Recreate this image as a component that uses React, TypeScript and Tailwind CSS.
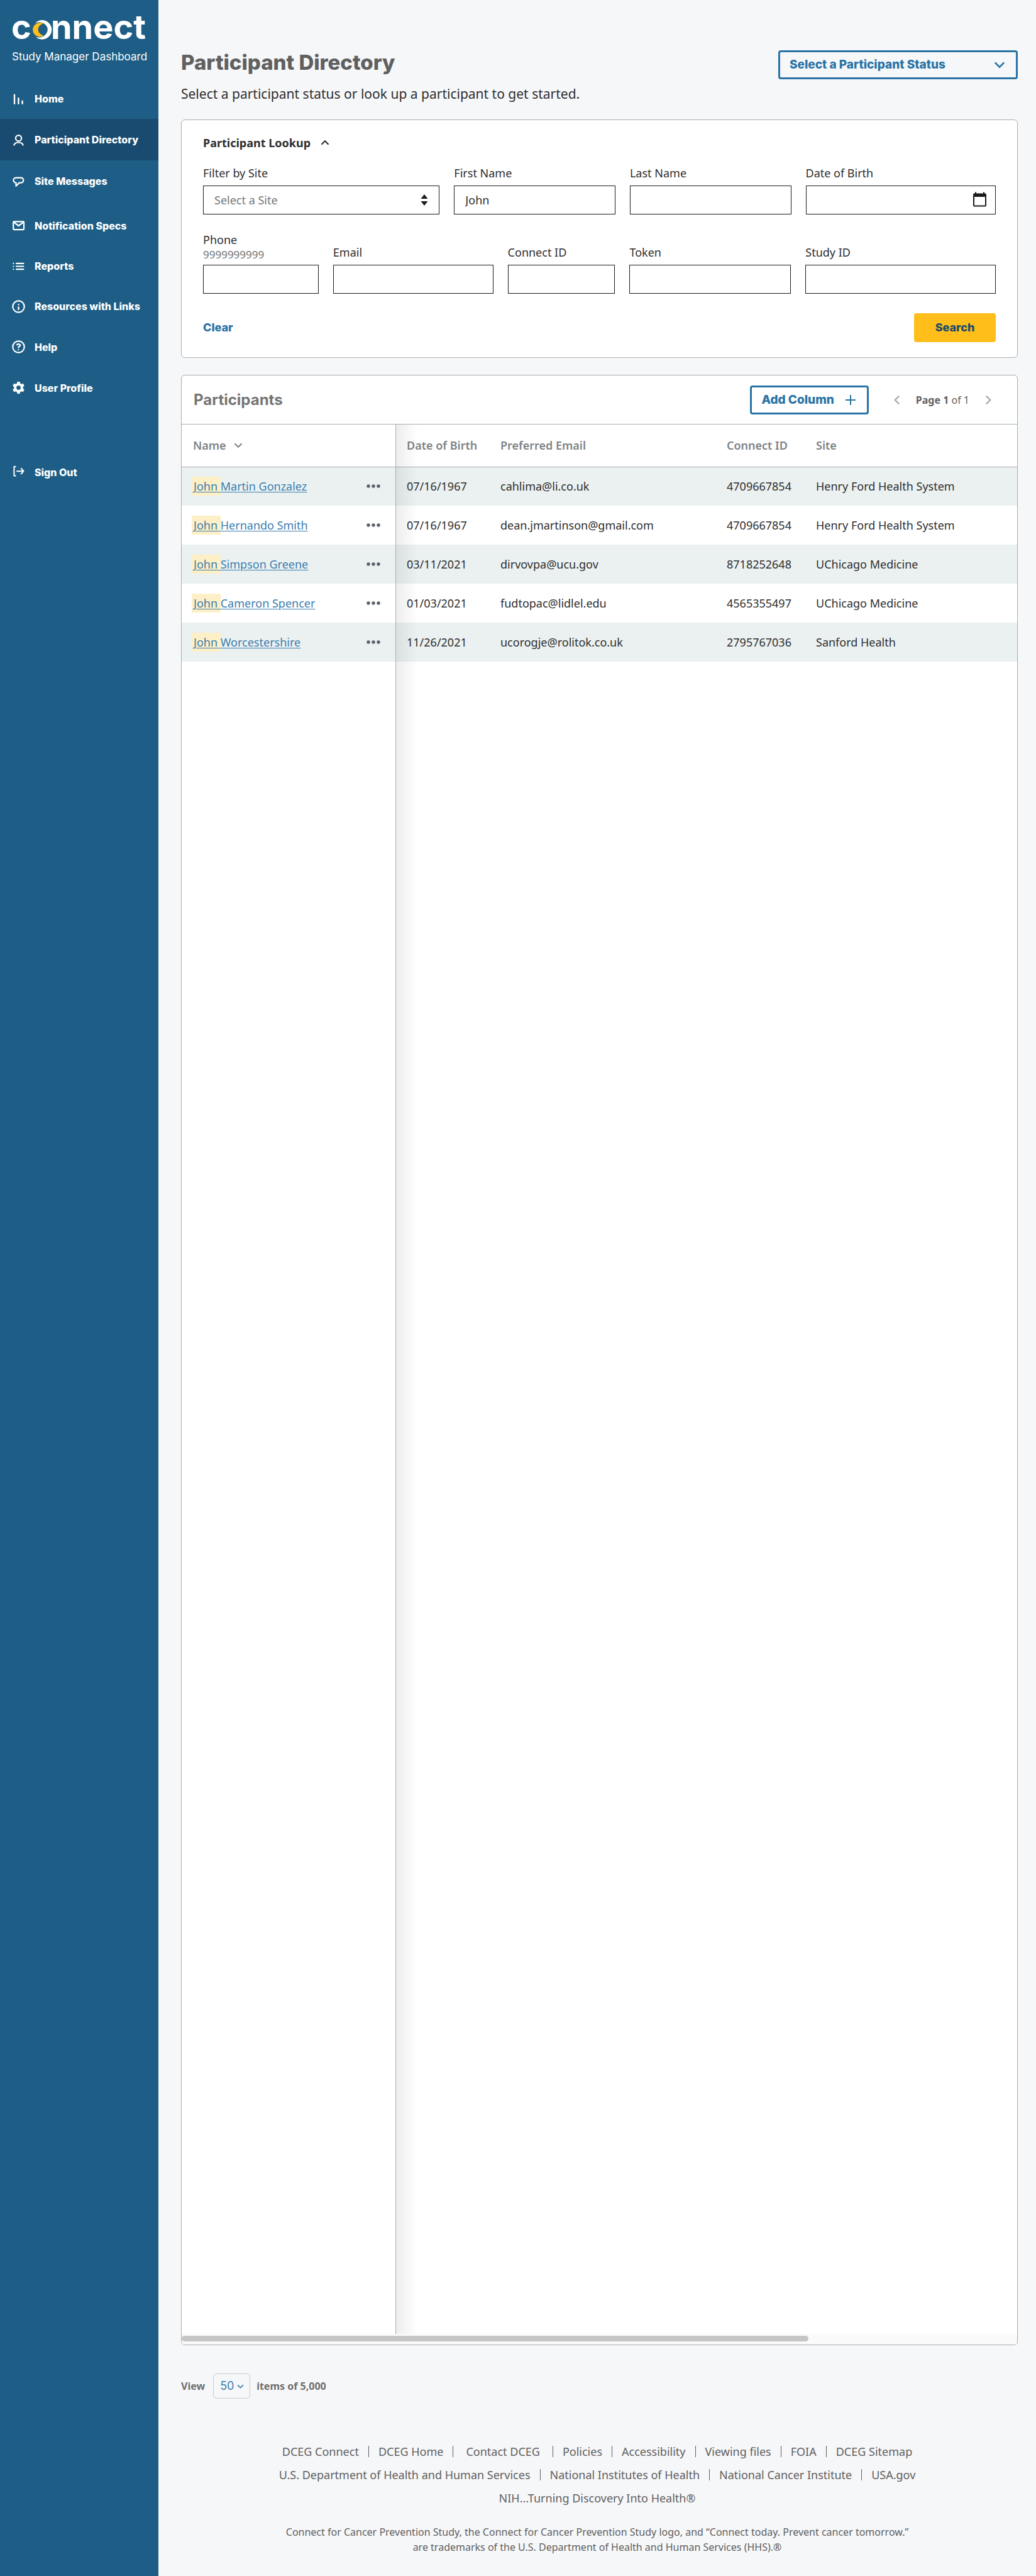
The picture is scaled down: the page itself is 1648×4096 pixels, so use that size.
import type { ReactNode } from "react";

const NOTO = "font-['Noto_Sans',sans-serif]";
const INTER = "font-['Inter',sans-serif]";

function Logo() {
  return (
    <svg viewBox="-4 -14 220 70" className="h-[70px] w-[220px]" role="img" aria-label="connect">
      <g fill="#fff" fontFamily="Inter, sans-serif" fontWeight="700" fontSize="54">
        <text x="-1" y="40">c</text>
        <text x="62" y="40">nnect</text>
      </g>
      <path
        fill="#fff"
        d="M36.7 15A15.3 15.3 0 1 1 38.2 37.1C43 38.2 48.5 37.5 51.5 34.8C58.5 29 58.5 20.5 51.5 15.8C48 13 41.5 12.3 36.7 15Z"
      />
      <path fill="#ffbe19" d="M50 15.4A11.3 11.3 0 1 0 50.8 34.6C38.8 31.5 38.8 18.5 50 15.4Z" />
    </svg>
  );
}

function Icon({ children }: { children: ReactNode }) {
  return (
    <svg
      viewBox="0 0 21 21"
      className="size-[21px] shrink-0"
      fill="none"
      stroke="currentColor"
      strokeWidth="2.2"
      strokeLinecap="round"
      strokeLinejoin="round"
      aria-hidden="true"
    >
      {children}
    </svg>
  );
}

function Chevron({ dir, className }: { dir: "up" | "down" | "left" | "right"; className: string }) {
  const d = { up: "M2 14l8-8 8 8", down: "M2 6l8 8 8-8", left: "M14 2l-8 8 8 8", right: "M6 2l8 8-8 8" }[dir];
  return (
    <svg viewBox="0 0 20 20" className={className} fill="none" stroke="currentColor" strokeWidth="3" aria-hidden="true">
      <path d={d} />
    </svg>
  );
}

const nav: { label: string; icon: ReactNode; row: string }[] = [
  { label: "Home", row: "h-[65px]", icon: <path strokeWidth="2.4" d="M4 4.6v14.2M10.4 10.2v8.6M16.6 14.6v4.2" /> },
  {
    label: "Participant Directory",
    row: "h-[66px] bg-[#184b6f] border-l-[#ffbe19]",
    icon: (
      <>
        <circle cx="10.5" cy="7.7" r="4.6" />
        <path strokeLinecap="butt" d="M3.3 19.5c.2-3.6 2.8-5 7.2-5s7 1.4 7.2 5" />
      </>
    ),
  },
  {
    label: "Site Messages",
    row: "h-[65px]",
    icon: <path d="M6.3 5.6h8a4 4 0 0 1 0 8h-2.6l-5.2 5.2v-5.2a4 4 0 0 1-.2-8z" />,
  },
  {
    label: "Notification Specs",
    row: "mt-[6px] h-[65px]",
    icon: (
      <>
        <rect x="2.2" y="4.3" width="16.8" height="12.8" rx="1" />
        <path d="M3 5.3l7.6 5.7 7.6-5.7" />
      </>
    ),
  },
  {
    label: "Reports",
    row: "h-[64px]",
    icon: <path d="M2.3 5.9h.1M2.3 10.5h.1M2.3 15.1h.1M7 5.9h11.4M7 10.5h11.4M7 15.1h11.4" />,
  },
  {
    label: "Resources with Links",
    row: "h-[64px]",
    icon: (
      <>
        <circle cx="10.5" cy="10.5" r="9.2" />
        <path strokeWidth="2.4" d="M10.5 7.1v.1M10.5 11.5v3.3" />
      </>
    ),
  },
  {
    label: "Help",
    row: "h-[65px]",
    icon: (
      <>
        <circle cx="10.5" cy="10.5" r="9.2" />
        <path d="M8 7.1c1.5-1.5 5.5-1.2 5.2 1.1-.2 1.6-2.8 1.6-3 3.4M10.2 15v.1" />
      </>
    ),
  },
  {
    label: "User Profile",
    row: "h-[65px]",
    icon: (
      <path
        fill="currentColor"
        stroke="none"
        fillRule="evenodd"
        transform="translate(.5 .5)"
        d="M7.9.5h4.2l.5 2.7 1.9 1.1 2.7-1 2 3.6-2.1 1.900v2.4l2.1 1.9-2 3.6-2.7-1-1.9 1.1-.5 2.7H7.9l-.5-2.7-1.9-1.1-2.7 1-2-3.600 2.1-1.9V8.8L.8 6.900l2-3.6 2.7 1 1.9-1.1zM10 6.600a3.4 3.4 0 1 0 0 6.8 3.4 3.4 0 0 0 0-6.8z"
      />
    ),
  },
  {
    label: "Sign Out",
    row: "mt-[69px] h-[65px]",
    icon: <path strokeWidth="2" d="M5.6 2H3.4v14.4h2.2M8 9.2h10M14.8 5l3.7 4.2-3.7 4.2" />,
  },
];

function Field({ id, label, children }: { id: string; label: string; children?: ReactNode }) {
  return (
    <div className="flex flex-col gap-2">
      <label htmlFor={id}>{label}</label>
      {children ?? <TextBox id={id} />}
    </div>
  );
}

function TextBox({ id, value }: { id: string; value?: string }) {
  return (
    <input id={id} type="text" defaultValue={value} className="h-[46px] w-full border border-[#1b1b1b] bg-white px-[17px]" />
  );
}

const people = [
  ["Martin Gonzalez", "07/16/1967", "cahlima@li.co.uk", "4709667854", "Henry Ford Health System"],
  ["Hernando Smith", "07/16/1967", "dean.jmartinson@gmail.com", "4709667854", "Henry Ford Health System"],
  ["Simpson Greene", "03/11/2021", "dirvovpa@ucu.gov", "8718252648", "UChicago Medicine"],
  ["Cameron Spencer", "01/03/2021", "fudtopac@lidlel.edu", "4565355497", "UChicago Medicine"],
  ["Worcestershire", "11/26/2021", "ucorogje@rolitok.co.uk", "2795767036", "Sanford Health"],
];

function LinkRow({ links }: { links: string[] }) {
  return (
    <ul className="flex h-[37px] items-center justify-center">
      {links.map((l, i) => (
        <li key={l} className="flex items-center">
          {i > 0 && <span className="mx-[15px] h-[18px] w-px bg-[#606060]" />}
          <a href="#" className={l === "Contact DCEG" ? "px-[5px]" : ""}>
            {l}
          </a>
        </li>
      ))}
    </ul>
  );
}

export default function App() {
  return (
    <div className={`flex min-h-screen bg-[#f6f7f9] text-[18px] leading-6 text-[#2e2e2f] ${NOTO}`}>
      <aside className={`w-[252px] shrink-0 bg-[#1e5e86] pt-2 text-white ${INTER}`}>
        <div className="pl-[15px]">
          <Logo />
          <p className="pl-1 text-[17px] leading-6">Study Manager Dashboard</p>
        </div>
        <nav className="mt-[22px]">
          <ul>
            {nav.map((n) => (
              <li key={n.label} className={`border-l-[6px] border-l-transparent ${n.row}`}>
                <a href="#" className="flex h-full items-center gap-[15px] pl-[13px] text-[16px] font-extrabold">
                  <Icon>{n.icon}</Icon>
                  {n.label}
                </a>
              </li>
            ))}
          </ul>
        </nav>
      </aside>

      <main className="flex min-w-0 grow flex-col pt-[79px] pr-[29px] pl-9">
        <header className="flex items-start justify-between">
          <div>
            <h1 className={`text-[33px] leading-10 font-extrabold text-[#606060] ${INTER}`}>Participant Directory</h1>
            <p className="mt-4 text-[21px] leading-7">Select a participant status or look up a participant to get started.</p>
          </div>
          <div className={`relative mt-px w-[381px] text-[#2973a5] ${INTER}`}>
            <select
              aria-label="Participant status"
              className="h-[46px] w-full appearance-none rounded-[4px] border-[3px] border-[#2973a5] bg-transparent pl-[15px] text-[19px] font-extrabold"
            >
              <option>Select a Participant Status</option>
            </select>
            <Chevron dir="down" className="pointer-events-none absolute top-[14px] right-5 size-[18px]" />
          </div>
        </header>

        <form className="mt-[27px] rounded-[6px] border border-[#a9adae] bg-white pt-[22px] pr-[34px] pb-6 pl-[34px]">
          <h2>
            <button type="button" className="flex h-7 items-center gap-4 font-bold">
              Participant Lookup
              <Chevron dir="up" className="size-[14px]" />
            </button>
          </h2>
          <div className="mt-[22px] grid grid-cols-[377fr_257fr_257fr_303fr] gap-[23px]">
            <Field id="site" label="Filter by Site">
              <div className="relative">
                <select id="site" className="h-[46px] w-full appearance-none border border-[#1b1b1b] bg-white pl-[17px] text-[#71767a]">
                  <option>Select a Site</option>
                </select>
                <svg viewBox="0 0 12 18" className="pointer-events-none absolute top-[14px] right-[18px] h-[18px] w-3" fill="#1b1b1b" aria-hidden="true">
                  <path d="M6 0l5.5 7h-11zM6 18l5.5-7h-11z" />
                </svg>
              </div>
            </Field>
            <Field id="first" label="First Name">
              <TextBox id="first" value="John" />
            </Field>
            <Field id="last" label="Last Name" />
            <Field id="dob" label="Date of Birth">
              <div className="relative">
                <TextBox id="dob" />
                <button type="button" aria-label="Open calendar" className="absolute top-[10px] right-[15px]">
                  <svg viewBox="0 0 21 24" className="h-6 w-[21px]" aria-hidden="true">
                    <path
                      fill="#1b1b1b"
                      fillRule="evenodd"
                      d="M3 .5h2v2h11v-2h2v2h1a2 2 0 0 1 2 2v17a2 2 0 0 1-2 2H2a2 2 0 0 1-2-2v-17a2 2 0 0 1 2-2h1zM2 8v13.5h17v-13.5z"
                    />
                  </svg>
                </button>
              </div>
            </Field>
          </div>
          <div className="mt-7 grid grid-cols-[184fr_255fr_171fr_257fr_303fr] items-end gap-[23px]">
            <div className="flex flex-col gap-1">
              <label htmlFor="phone">
                Phone
                <span className="block text-[17px] text-[#71767a]">9999999999</span>
              </label>
              <TextBox id="phone" />
            </div>
            <Field id="email" label="Email" />
            <Field id="cid" label="Connect ID" />
            <Field id="token" label="Token" />
            <Field id="study" label="Study ID" />
          </div>
          <div className={`mt-[31px] flex items-center justify-between font-extrabold ${INTER}`}>
            <button type="reset" className="text-[#2973a5]">Clear</button>
            <button type="submit" className="h-[46px] w-[130px] rounded-[4px] bg-[#ffbe19] text-[#184b6f]">Search</button>
          </div>
        </form>

        <section className="mt-[27px] flex grow flex-col overflow-hidden rounded-[6px] border border-[#a9adb0] bg-white">
          <div className="flex h-[78px] items-center border-b border-[#a9adb0] pr-[38px] pl-[19px]">
            <h2 className={`grow text-[24px] font-bold text-[#757575] ${INTER}`}>Participants</h2>
            <button
              type="button"
              className={`flex h-[46px] items-center gap-[18px] rounded-[4px] border-[3px] border-[#2973a5] pr-[18px] pl-[15px] text-[19px] font-extrabold text-[#2973a5] ${INTER}`}
            >
              Add Column
              <svg viewBox="0 0 16 16" className="size-4" stroke="currentColor" strokeWidth="2" aria-hidden="true">
                <path d="M8 0v16M0 8h16" />
              </svg>
            </button>
            <div className="ml-[37px] flex items-center gap-[22px] text-[16px] text-[#606060]">
              <button type="button" aria-label="Previous page" className="text-[#a9adb0]">
                <Chevron dir="left" className="size-4" />
              </button>
              <span>
                <b>Page 1</b> of 1
              </span>
              <button type="button" aria-label="Next page" className="text-[#a9adb0]">
                <Chevron dir="right" className="size-4" />
              </button>
            </div>
          </div>

          <div className="relative grow">
            <table className="w-full table-fixed border-collapse text-left">
              <colgroup>
                <col className="w-[340px]" />
                <col className="w-[149px]" />
                <col className="w-[360px]" />
                <col className="w-[142px]" />
                <col />
              </colgroup>
              <thead>
                <tr className="h-[67px] border-b border-[#a9adb0] text-[#7d8386]">
                  <th className="pl-[18px] font-semibold">
                    <button type="button" className="flex items-center gap-3">
                      Name
                      <Chevron dir="down" className="size-[14px]" />
                    </button>
                  </th>
                  {["Date of Birth", "Preferred Email", "Connect ID", "Site"].map((h) => (
                    <th key={h} className="pl-[18px] font-semibold">
                      {h}
                    </th>
                  ))}
                </tr>
              </thead>
              <tbody>
                {people.map(([name, ...cells]) => (
                  <tr key={name} className="h-[62px] odd:bg-[#ebf1f1]">
                    <td className="pr-6 pl-4">
                      <div className="flex items-center justify-between">
                        <a href="#" className="text-[#3b7dae] underline underline-offset-2">
                          <mark className="bg-[#fdefc6] py-[3px] pl-[3px] text-inherit">John&nbsp;</mark>
                          {name}
                        </a>
                        <button type="button" aria-label={`Actions for John ${name}`}>
                          <svg viewBox="0 0 22 6" className="h-[6px] w-[22px]" fill="#5a5f69" aria-hidden="true">
                            <circle cx="3" cy="3" r="2.7" />
                            <circle cx="11" cy="3" r="2.7" />
                            <circle cx="19" cy="3" r="2.7" />
                          </svg>
                        </button>
                      </div>
                    </td>
                    {cells.map((c, i) => (
                      <td key={i} className="pl-[18px]">
                        {c}
                      </td>
                    ))}
                  </tr>
                ))}
              </tbody>
            </table>
            <div className="pointer-events-none absolute inset-y-0 left-[340px] w-9 border-l border-[#a9adb0] bg-linear-to-r from-black/7 to-transparent" />
          </div>
          <div className="bg-[#fafafa] pt-[3px] pb-[5px]">
            <div className="h-[9px] w-3/4 rounded-full bg-[#c6c6c6]" />
          </div>
        </section>

        <div className="mt-[45px] flex items-center text-[16px] font-bold text-[#6e6e6e]">
          <label htmlFor="count">View</label>
          <div className={`relative mr-[10px] ml-[13px] w-[59px] font-normal text-[#3b7dae] ${INTER}`}>
            <select id="count" className="h-10 w-full appearance-none rounded-[5px] border border-[#c9c9c9] bg-transparent pl-[10px] text-[18px]">
              <option>50</option>
            </select>
            <Chevron dir="down" className="pointer-events-none absolute top-[15px] right-[10px] size-[11px]" />
          </div>
          <span>items of 5,000</span>
        </div>

        <footer className="mt-[65px] pr-[7px] pb-[34px] text-center text-[#606060]">
          <LinkRow
            links={["DCEG Connect", "DCEG Home", "Contact DCEG", "Policies", "Accessibility", "Viewing files", "FOIA", "DCEG Sitemap"]}
          />
          <LinkRow
            links={["U.S. Department of Health and Human Services", "National Institutes of Health", "National Cancer Institute", "USA.gov"]}
          />
          <LinkRow links={["NIH...Turning Discovery Into Health®"]} />
          <p className="mt-6 text-[16px]">
            Connect for Cancer Prevention Study, the Connect for Cancer Prevention Study logo, and “Connect today. Prevent cancer tomorrow.”
            <br />
            are trademarks of the U.S. Department of Health and Human Services (HHS).®
          </p>
        </footer>
      </main>
    </div>
  );
}
